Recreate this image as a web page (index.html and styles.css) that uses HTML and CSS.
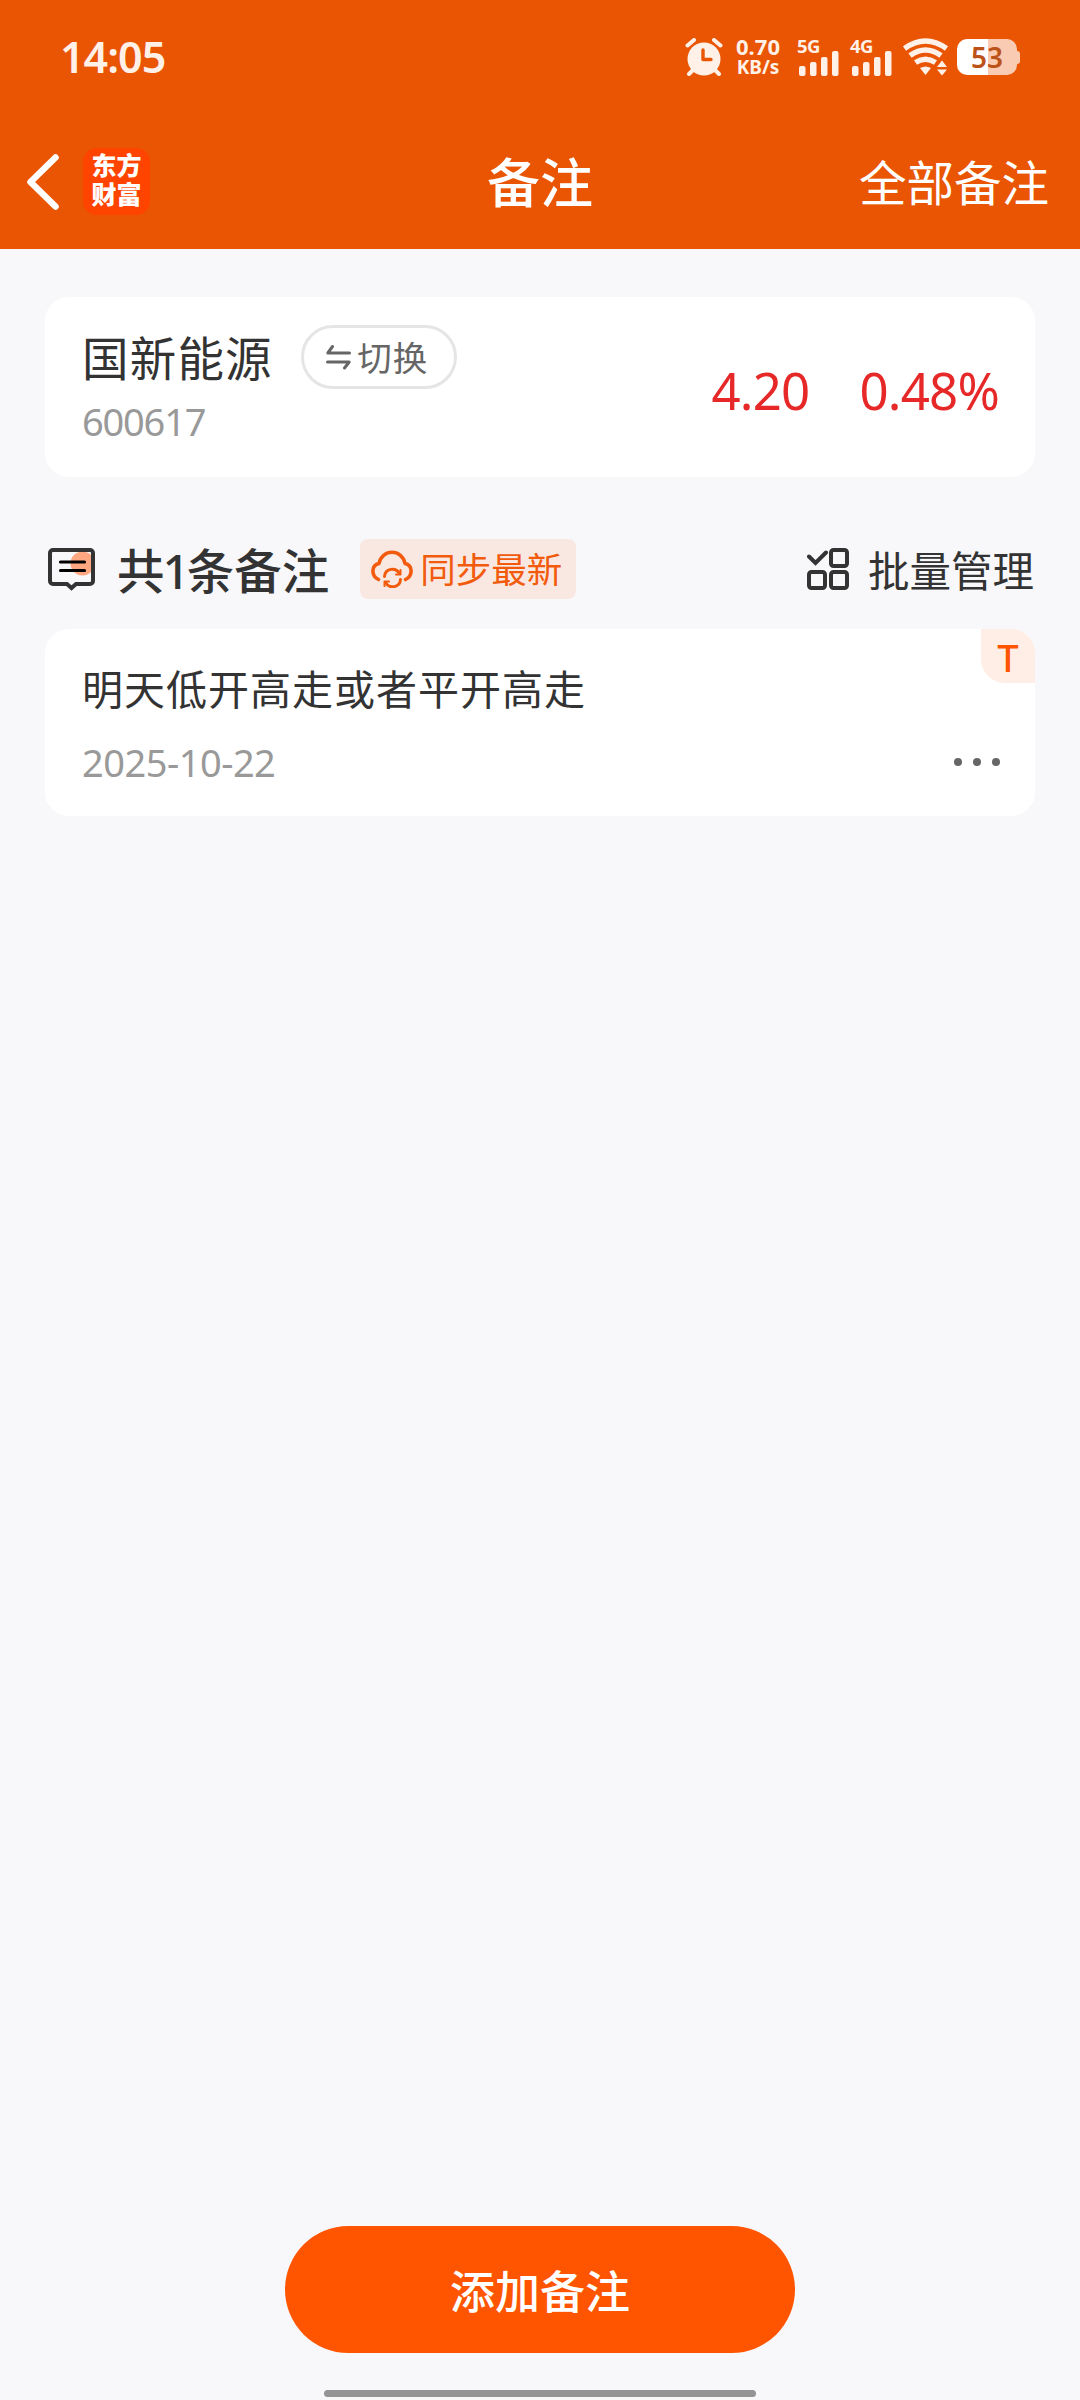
FILE: index.html
```
<!DOCTYPE html>
<html lang="zh-CN">
<head>
    <meta charset="UTF-8">
    <meta name="viewport" content="width=device-width, initial-scale=1.0">
    <title>备注</title>
    <link rel="stylesheet" href="styles.css">
</head>
<body>
    <header class="header">
        <!-- 状态栏 -->
        <div class="status-bar">
            <span class="time">14:05</span>
            <div class="status-icons">
                <svg class="alarm" width="38" height="38" viewBox="0 0 38 38">
                    <circle cx="19" cy="21" r="16.5" fill="#fff0e8"/>
                    <path d="M2.5 7.5L9 2M35.5 7.5L29 2M8 32l-4 4M30 32l4 4" stroke="#fff0e8" stroke-width="4" stroke-linecap="round"/>
                    <path d="M18 12v9.5h8" fill="none" stroke="#e95502" stroke-width="3.4" stroke-linecap="round" stroke-linejoin="round"/>
                </svg>
                <div class="speed">
                    <span class="speed-num">0.70</span>
                    <span class="speed-unit">KB/s</span>
                </div>
                <div class="signal">
                    <span>5G</span>
                    <svg width="41" height="26" viewBox="0 0 41 26" fill="#fff0e8">
                        <rect x="0" y="15" width="6.5" height="10" rx="2"/>
                        <rect x="11" y="11" width="6.5" height="14" rx="2"/>
                        <rect x="22" y="6" width="6.5" height="19" rx="2"/>
                        <rect x="33" y="0" width="6.5" height="25" rx="2"/>
                    </svg>
                </div>
                <div class="signal">
                    <span>4G</span>
                    <svg width="41" height="26" viewBox="0 0 41 26" fill="#fff0e8">
                        <rect x="0" y="15" width="6.5" height="10" rx="2"/>
                        <rect x="11" y="11" width="6.5" height="14" rx="2"/>
                        <rect x="22" y="6" width="6.5" height="19" rx="2"/>
                        <rect x="33" y="0" width="6.5" height="25" rx="2"/>
                    </svg>
                </div>
                <svg class="wifi" width="46" height="38" viewBox="0 0 46 38">
                    <g fill="none" stroke="#fff0e8" stroke-width="5.5">
                        <path d="M1.5 10.5Q22.5 -4.5 43.5 10.5"/>
                        <path d="M7 17.5Q22.5 6.5 38 17.5"/>
                        <path d="M12.5 24.5Q22.5 18 32.5 24.5"/>
                    </g>
                    <path d="M17 30q5.5-3 11 0L22.5 37z" fill="#fff0e8"/>
                    <path d="M34 29l5-6.5 5 6.5zM34 31.5h10l-5 6z" fill="#fff0e8"/>
                </svg>
                <div class="battery"><span>53</span></div>
            </div>
        </div>
        <!-- 导航栏 -->
        <div class="nav-bar">
            <div class="nav-left">
                <svg class="back" width="34" height="58" viewBox="0 0 34 58">
                    <path d="M29.5 4.5L4.5 29l25 24.5" fill="none" stroke="#fff" stroke-width="6.5" stroke-linecap="round" stroke-linejoin="round"/>
                </svg>
                <div class="logo">东方<br>财富</div>
            </div>
            <h1>备注</h1>
            <a class="all-notes">全部备注</a>
        </div>
    </header>

    <main>
        <section class="card stock">
            <div class="stock-info">
                <div class="stock-title">
                    <span class="stock-name">国新能源</span>
                    <button class="switch">
                        <svg width="25" height="26" viewBox="0 0 25 26">
                            <path d="M23.5 9H1.8L6.5 2.5M1.5 18h21.7L18.5 24" fill="none" stroke="#666" stroke-width="3" stroke-linecap="round" stroke-linejoin="round"/>
                        </svg>
                        <span>切换</span>
                    </button>
                </div>
                <div class="stock-code">600617</div>
            </div>
            <div class="price">
                <span>4.20</span>
                <span>0.48%</span>
            </div>
        </section>

        <div class="toolbar">
            <svg class="note-icon" width="50" height="44" viewBox="0 0 50 44">
                <circle cx="35.5" cy="16.5" r="12" fill="#ffa781"/>
                <path d="M6 3h37a3 3 0 0 1 3 3v28a3 3 0 0 1-3 3H29L24.5 41l-4.5-4H6a3 3 0 0 1-3-3V6a3 3 0 0 1 3-3z" fill="none" stroke="#333" stroke-width="4"/>
                <path d="M13.5 15h24M13.5 23.5h24" stroke="#000" stroke-width="3.2" stroke-linecap="round"/>
            </svg>
            <h2>共<span class="count">1</span>条备注</h2>
            <button class="sync">
                <svg width="42" height="38" viewBox="0 0 42 38" fill="none" stroke="#f25a0c" stroke-width="3.6" stroke-linecap="round" stroke-linejoin="round">
                    <path d="M7.5 29.5C-.5 25.5 .5 15 8 13.5C11 -1.5 31 -1.5 34 13.5C41.5 15 42.5 25.5 34.5 29.5"/>
                    <path d="M13.5 26.5c.5-8 11-10 15-3M29.5 29.5c-.5 8-11 10-15 3" stroke-width="3"/>
                    <path d="M29.5 20v4.5h-4.5M13.5 36v-4.5h4.5" stroke-width="2"/>
                </svg>
                <span>同步最新</span>
            </button>
            <div class="batch">
                <svg width="42" height="42" viewBox="0 0 42 42" fill="none" stroke="#333" stroke-width="4">
                    <path d="M2 8.5L8.5 15L19 4.5" stroke-linecap="round"/>
                    <rect x="24" y="2" width="16" height="16" rx="2.5"/>
                    <rect x="2" y="24" width="16" height="16" rx="2.5"/>
                    <rect x="24" y="24" width="16" height="16" rx="2.5"/>
                </svg>
                <span>批量管理</span>
            </div>
        </div>

        <section class="card note">
            <span class="tag">T</span>
            <p class="note-text">明天低开高走或者平开高走</p>
            <div class="note-footer">
                <span class="date">2025-10-22</span>
                <div class="more"><i></i><i></i><i></i></div>
            </div>
        </section>
    </main>

    <footer class="footer">
        <button class="add">添加备注</button>
        <div class="home-bar"></div>
    </footer>
</body>
</html>
```
FILE: styles.css
```
* {
    box-sizing: border-box;
}

body {
    font-family: 'Noto Sans', 'Noto Sans CJK SC', sans-serif;
    margin: 0;
    height: 2400px;
    display: flex;
    flex-direction: column;
    background-color: #f8f8fa;
    color: #333;
}

h1, h2, p {
    margin: 0;
}

button {
    font-family: inherit;
    padding: 0;
    border: none;
}

svg {
    display: block;
    flex-shrink: 0;
}

.header {
    height: 249px;
    background-color: #e95502;
    color: #fff;
}

/* 状态栏 */
.status-bar {
    height: 114px;
    padding: 0 59px 0 60px;
    display: flex;
    justify-content: space-between;
    align-items: center;
    color: #fff0e8;
}

.time {
    margin-top: -2px;
    font-size: 43px;
    font-weight: 600;
    letter-spacing: -1px;
}

.status-icons {
    display: flex;
    height: 38px;
}

.speed {
    width: 48px;
    margin-left: 11px;
    display: flex;
    flex-direction: column;
    align-items: center;
    font-weight: 700;
}

.speed-num {
    font-size: 22px;
    line-height: 17px;
}

.speed-unit {
    font-size: 19px;
    line-height: 25px;
}

.signal {
    position: relative;
    width: 41px;
    height: 38px;
    padding-top: 12.5px;
    margin-left: 17px;
}

.signal + .signal {
    margin-left: 12px;
}

.signal span {
    position: absolute;
    left: -2px;
    top: 0;
    font-size: 18.5px;
    font-weight: 700;
    line-height: 16px;
    letter-spacing: -0.5px;
}

.wifi {
    margin-left: 10px;
}

.battery {
    position: relative;
    width: 60px;
    height: 36px;
    margin: 1px 4px 0 8px;
    border-radius: 10px;
    background: linear-gradient(to right, #fff 31px, #f9cbb2 31px);
    color: #bd5219;
    font-size: 28px;
    font-weight: 600;
    line-height: 36px;
    text-align: center;
}

.battery::after {
    content: '';
    position: absolute;
    right: -3px;
    top: 12px;
    width: 3px;
    height: 13px;
    border-radius: 0 3px 3px 0;
    background-color: #f9cbb2;
}

/* 导航栏 */
.nav-bar {
    height: 135px;
    padding: 0 31px 0 26px;
    display: grid;
    grid-template-columns: 1fr auto 1fr;
    align-items: center;
}

.nav-left {
    display: flex;
    align-items: center;
}

.logo {
    width: 67px;
    height: 67px;
    margin-left: 23px;
    padding-top: 3px;
    border-radius: 14px;
    background-color: #ff4400;
    font-size: 25px;
    font-weight: 900;
    line-height: 29px;
    text-align: center;
}

.nav-bar h1 {
    margin-left: 5px;
    padding-top: 2px;
    font-size: 53px;
    font-weight: 500;
    line-height: 60px;
}

.all-notes {
    justify-self: end;
    padding-top: 2px;
    font-size: 47.5px;
    line-height: 60px;
}

main {
    flex: 1;
    padding: 48px 45px 0;
}

.card {
    border-radius: 24px;
    background-color: #fff;
}

.stock {
    height: 180px;
    padding: 28px 36px 0 37px;
    display: flex;
    justify-content: space-between;
}

.stock-title {
    display: flex;
    align-items: center;
    height: 64px;
}

.stock-name {
    padding-top: 2px;
    font-size: 46.5px;
    line-height: 62px;
    letter-spacing: 1.2px;
}

.switch {
    width: 156px;
    height: 64px;
    margin-left: 28px;
    display: flex;
    align-items: center;
    justify-content: center;
    border: 3px solid #e5e5e5;
    border-radius: 32px;
    background-color: #fff;
    color: #666;
    font-size: 34.5px;
    line-height: 56px;
    letter-spacing: 1px;
}

.switch svg {
    margin-left: -3px;
}

.switch span {
    margin-left: 6px;
    padding-top: 1px;
}

.stock-code {
    margin-top: 9px;
    color: #999;
    font-size: 38px;
    line-height: 46px;
    letter-spacing: -1.2px;
}

.price {
    padding-top: 34px;
    display: flex;
    gap: 50px;
    color: #e62828;
    font-size: 51px;
    line-height: 62px;
    letter-spacing: -0.8px;
}

/* 备注数量和操作 */
.toolbar {
    height: 152px;
    padding: 62px 1px 30px 2px;
    display: flex;
    align-items: center;
}

.toolbar h2 {
    margin-left: 20px;
    padding-top: 3px;
    font-size: 47.5px;
    font-weight: 500;
    line-height: 60px;
}

.count {
    margin: 0 -3px 0 -2px;
}

.sync {
    width: 216px;
    height: 60px;
    margin-left: 31px;
    padding-left: 11px;
    display: flex;
    align-items: center;
    border-radius: 8px;
    background-color: #f9e8e1;
    color: #f25a0c;
    font-size: 35.5px;
    line-height: 56px;
}

.sync span {
    margin-left: 7px;
    padding-bottom: 1px;
}

.batch {
    margin-left: auto;
    display: flex;
    align-items: center;
    gap: 19px;
    font-size: 41.5px;
    line-height: 60px;
}

.batch span {
    padding-top: 3px;
}

.note {
    position: relative;
    height: 187px;
    padding: 30px 35px 0 37px;
    overflow: hidden;
}

.tag {
    position: absolute;
    right: 0;
    top: 0;
    width: 54px;
    height: 54px;
    border-radius: 0 0 0 24px;
    background-color: #ffeee6;
    color: #ff5500;
    font-size: 38px;
    font-weight: 500;
    line-height: 56px;
    text-align: center;
}

.note-text {
    font-size: 41px;
    line-height: 60px;
    letter-spacing: 1px;
}

.note-footer {
    margin-top: 18px;
    display: flex;
    justify-content: space-between;
    align-items: center;
}

.date {
    color: #999;
    font-size: 38px;
    line-height: 50px;
    letter-spacing: -0.5px;
}

.more {
    display: flex;
    gap: 11px;
}

.more i {
    width: 8px;
    height: 8px;
    border-radius: 50%;
    background-color: #666;
}

.footer {
    display: flex;
    flex-direction: column;
    align-items: center;
}

.add {
    width: 510px;
    height: 127px;
    border-radius: 64px;
    background-color: #ff5500;
    color: #fff;
    font-size: 45px;
    font-weight: 500;
}

.home-bar {
    width: 432px;
    height: 7px;
    margin: 37px 0 3px;
    border-radius: 4px;
    background-color: #949494;
}
```
